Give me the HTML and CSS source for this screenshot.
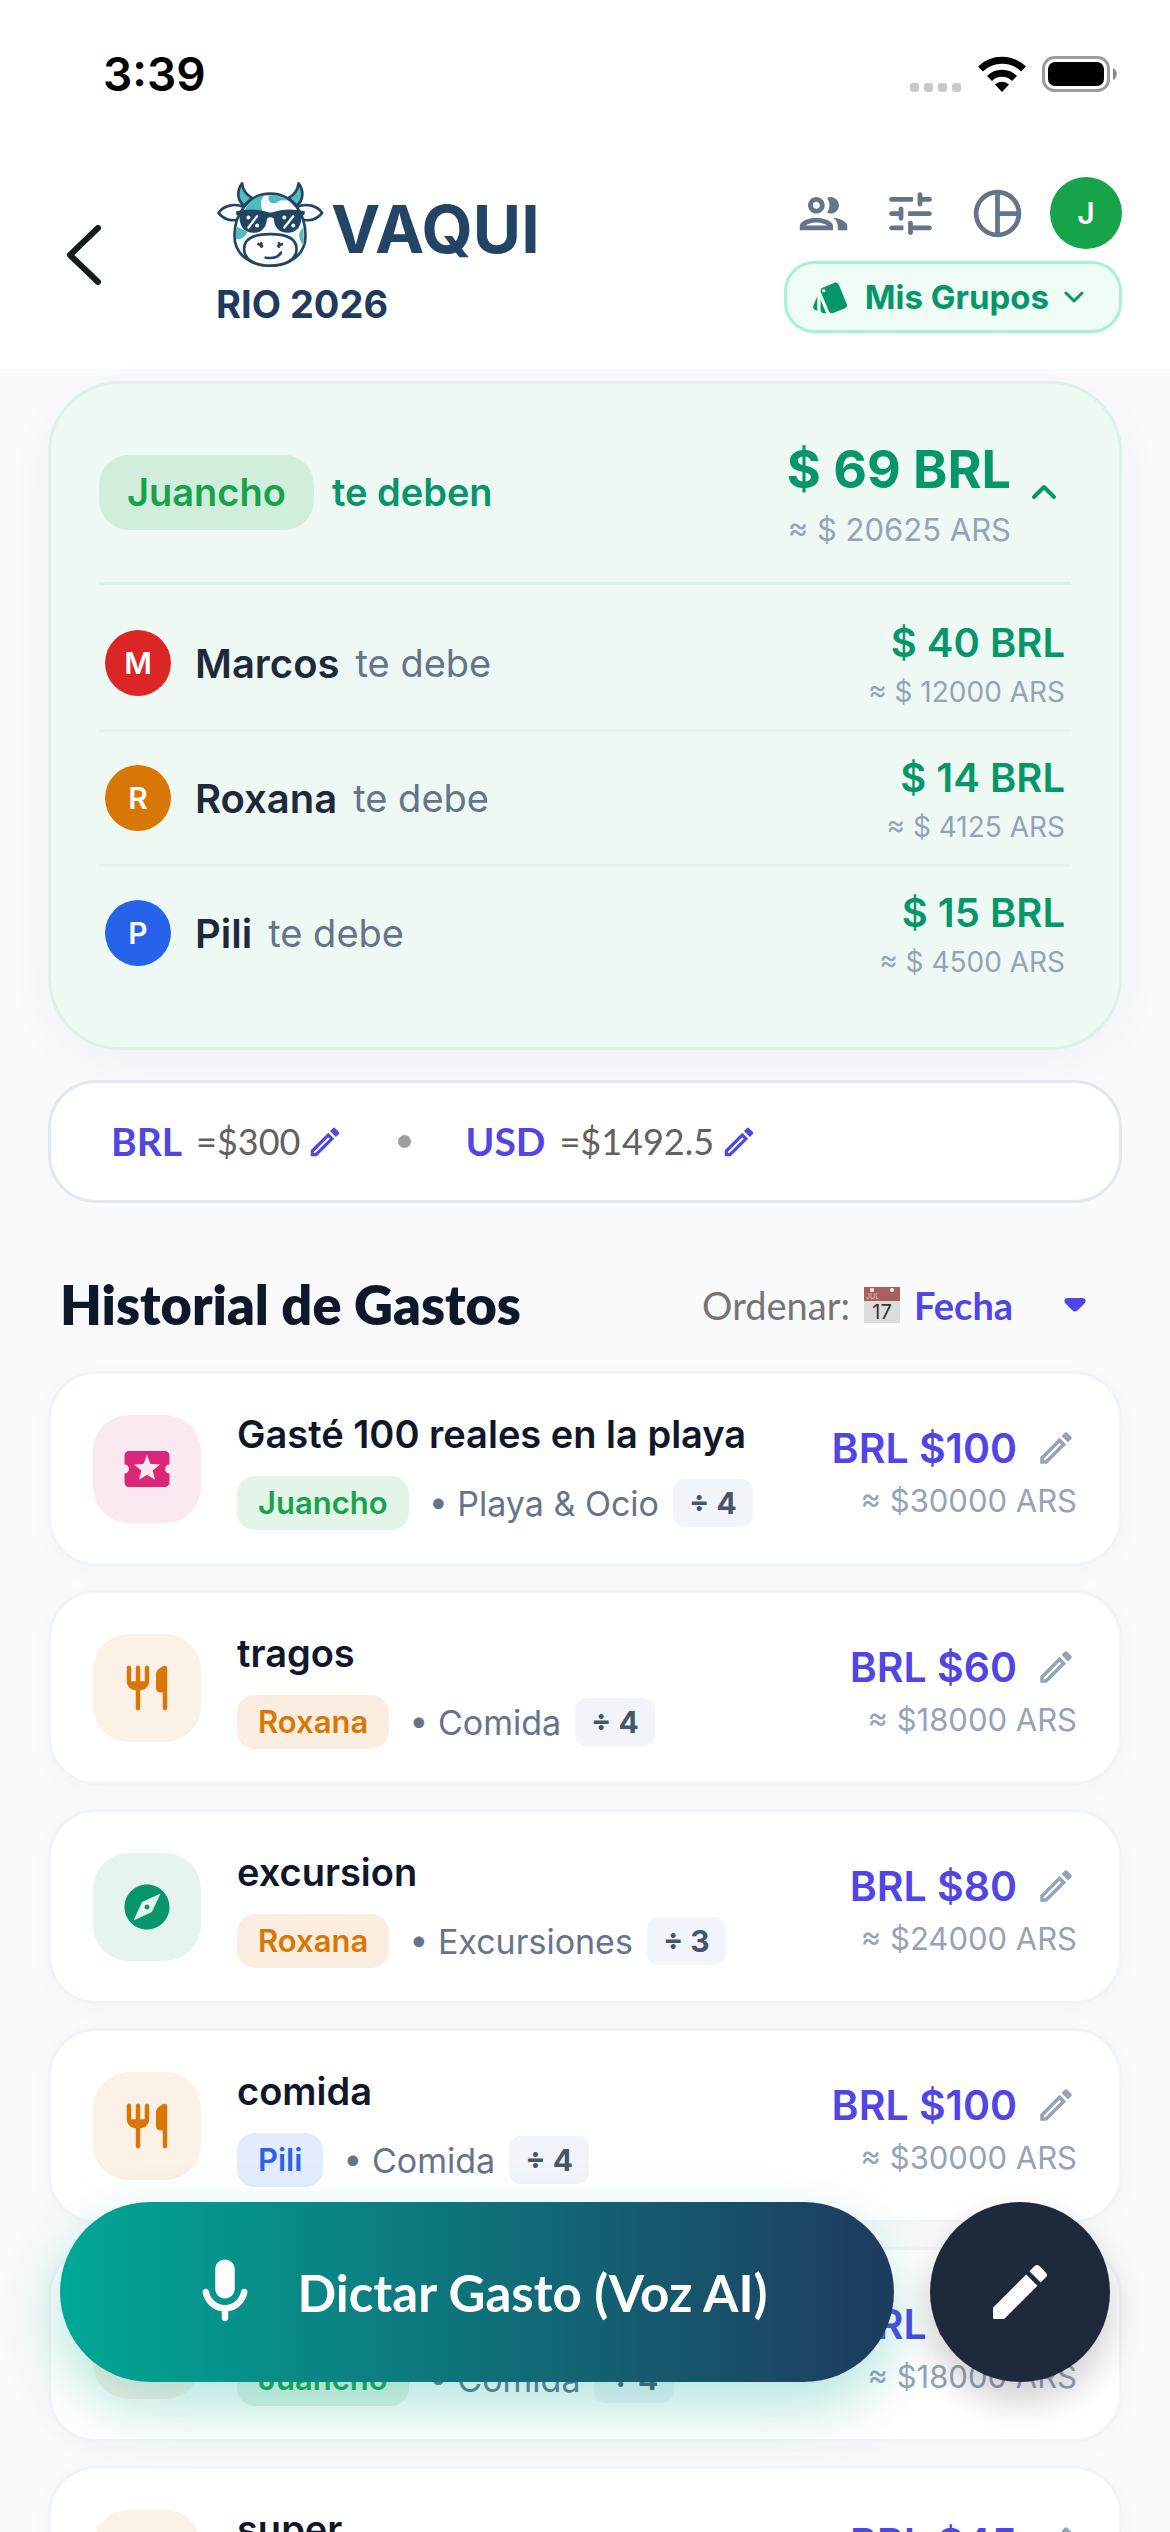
FILE: index.html
```
<!doctype html>
<html lang="es">
  <head>
    <meta charset="utf-8" />
    <title>Vaqui - RIO 2026</title>
    <meta name="viewport" content="width=device-width, initial-scale=1" />
    <link rel="stylesheet" href="styles.css">
  </head>
  <body>
    <!-- shared icons -->
    <svg class="sprite" aria-hidden="true">
      <symbol id="pencil" viewBox="0 0 24 24">
        <path d="M14.06 9.02l.92.92L5.92 19H5v-.92l9.06-9.06M17.66 3c-.25 0-.51.1-.7.29l-1.83 1.83 3.75 3.75 1.83-1.83c.39-.39.39-1.02 0-1.41l-2.34-2.34c-.2-.2-.45-.29-.71-.29zm-3.6 3.19L3 17.25V21h3.75L17.81 9.94l-3.75-3.75z" />
      </symbol>
      <symbol id="food" viewBox="0 0 24 24">
        <path d="M16 6v6c0 1.1.9 2 2 2h1v7c0 .55.45 1 1 1s1-.45 1-1V3.13c0-.65-.61-1.13-1.24-.98C17.6 2.68 16 4.51 16 6zm-5 3H9V3c0-.55-.45-1-1-1s-1 .45-1 1v6H5V3c0-.55-.45-1-1-1s-1 .45-1 1v6c0 2.21 1.79 4 4 4v8c0 .55.45 1 1 1s1-.45 1-1v-8c2.21 0 4-1.79 4-4V3c0-.55-.45-1-1-1s-1 .45-1 1v6z" />
      </symbol>
    </svg>

    <div class="app">
      <div class="status">
        <span class="time">3:39</span>
        <div class="signals">
          <svg width="52" height="36" viewBox="0 0 52 36" fill="#c9c9c9">
            <rect x="0" y="27" width="9" height="9" rx="3" />
            <rect x="14" y="27" width="9" height="9" rx="3" />
            <rect x="28" y="27" width="9" height="9" rx="3" />
            <rect x="42" y="27" width="9" height="9" rx="3" />
          </svg>
          <svg width="48" height="36" viewBox="0 0 48 36">
            <path d="M24 36l-7-7.500a10 10 0 0 1 14 0z" />
            <path d="M11.500 22.500a17.500 17.500 0 0 1 25 0" fill="none" stroke="#000" stroke-width="7" />
            <path d="M2.500 13a31 31 0 0 1 43 0" fill="none" stroke="#000" stroke-width="7" />
          </svg>
          <svg width="76" height="36" viewBox="0 0 76 36">
            <rect x="1.500" y="1.500" width="65" height="33" rx="11" fill="none" stroke="#9b9b9b" stroke-width="3" />
            <rect x="6" y="6" width="56" height="24" rx="7" />
            <path d="M71 12c5 2 5 10 0 12z" fill="#8a8a8a" />
          </svg>
        </div>
      </div>

      <header class="header">
        <button class="back" aria-label="Volver">
          <svg width="36" height="60" viewBox="0 0 36 60"><path d="M32 3L4 30l28 27" fill="none" stroke="#151d1b" stroke-width="6" stroke-linecap="round" stroke-linejoin="round" /></svg>
        </button>
        <div class="brand">
          <div class="logo">
            <svg width="108" height="87" viewBox="58 50 324 262" fill="none" stroke="#224465" stroke-width="8" stroke-linecap="round" stroke-linejoin="round">
              <path d="M136 57C120 78 120 108 142 124L166 101C148 92 139 80 136 57zM306 57C322 78 322 108 300 124L276 101C294 92 303 80 306 57z" fill="#51bcbe" />
              <path d="M142 128C112 116 80 124 65 146C80 166 104 172 126 166M300 128C330 116 362 124 377 146C362 166 338 172 316 166" fill="#fafcfd" />
              <path d="M221 88C290 88 327 150 327 215C327 275 275 305 221 305C165 305 113 275 113 215C113 150 155 88 221 88z" fill="#fafcfd" />
              <g fill="#51bcbe" stroke="none">
                <path d="M204 93C190 105 192 120 197 142L143 140C153 115 176 95 204 93zM216 93C240 91 258 98 272 108C260 110 252 104 243 114C228 122 212 116 216 93z" />
                <path d="M119 186L152 204C142 222 130 226 117 224zM321 186L308 208C307 225 315 237 322 242z" />
              </g>
              <path d="M221 210C275 210 300 225 300 255C300 290 260 305 221 305C180 305 142 290 142 255C142 225 170 210 221 210z" fill="#fff" />
              <path d="M118 141Q170 130 206 142Q221 148 236 142Q272 130 325 141L324 151L315 158C314 190 298 206 274 206C246 206 233 188 231 162Q221 156 211 162C209 188 198 206 170 206C144 206 129 190 128 158L118 151z" fill="#224465" stroke="none" />
              <g stroke="#fff" stroke-width="7">
                <path d="M181 156L155 190M290 156L263 190" />
                <g fill="#fff" stroke="none">
                  <circle cx="155" cy="160" r="6" /><circle cx="181" cy="184" r="6" />
                  <circle cx="263" cy="160" r="6" /><circle cx="290" cy="184" r="6" />
                </g>
              </g>
              <path d="M185 240L196 246M194 238V248M256 240L245 246M247 238V248M207 281Q242 286 253 266" />
            </svg>
            <span class="wordmark">VAQUI</span>
          </div>
          <h1 class="group-name">RIO 2026</h1>
        </div>
        <div class="tools">
          <div class="tool-row">
            <button class="tool" aria-label="Participantes">
              <svg viewBox="0 0 24 24"><path d="M9 13.750c-2.340 0-7 1.170-7 3.500V19h14v-1.750c0-2.330-4.660-3.500-7-3.500zM4.340 17c.84-.58 2.870-1.250 4.660-1.250s3.820.67 4.660 1.250H4.340zM9 12c1.930 0 3.500-1.570 3.500-3.500S10.930 5 9 5 5.500 6.570 5.500 8.500 7.070 12 9 12zm0-5c.83 0 1.500.67 1.500 1.500S9.830 10 9 10s-1.500-.67-1.500-1.500S8.170 7 9 7zm7.040 6.810c1.160.84 1.960 1.960 1.960 3.440V19h4v-1.750c0-2.020-3.500-3.170-5.960-3.440zM15 12c1.930 0 3.500-1.570 3.500-3.500S16.930 5 15 5c-.54 0-1.040.13-1.500.35.63.89 1 1.980 1 3.150s-.37 2.260-1 3.150c.46.22.96.35 1.500.35z" /></svg>
            </button>
            <button class="tool" aria-label="Ajustes">
              <svg viewBox="0 0 24 24"><path d="M3 18c0 .55.45 1 1 1h5v-2H4c-.55 0-1 .45-1 1zM3 6c0 .55.45 1 1 1h9V5H4c-.55 0-1 .45-1 1zm10 14v-1h7c.55 0 1-.45 1-1s-.45-1-1-1h-7v-1c0-.55-.45-1-1-1s-1 .45-1 1v4c0 .55.45 1 1 1s1-.45 1-1zM7 10v1H4c-.55 0-1 .45-1 1s.45 1 1 1h3v1c0 .55.45 1 1 1s1-.45 1-1v-4c0-.55-.45-1-1-1s-1 .45-1 1zm14 2c0-.55-.45-1-1-1h-9v2h9c.55 0 1-.45 1-1zm-5-3c.55 0 1-.45 1-1V7h3c.55 0 1-.45 1-1s-.45-1-1-1h-3V4c0-.55-.45-1-1-1s-1 .45-1 1v4c0 .55.45 1 1 1z" /></svg>
            </button>
            <button class="tool" aria-label="Resumen">
              <svg viewBox="0 0 24 24"><path d="M12 3v18M12 12h9M21 12a9 9 0 1 1-18 0a9 9 0 0 1 18 0z" fill="none" stroke="#64748b" stroke-width="2" /></svg>
            </button>
            <button class="avatar me">J</button>
          </div>
          <button class="groups">
            <svg width="39" height="39" viewBox="0 0 24 24" fill="#059669"><path d="M2.530 19.650l1.340.56v-9.030l-2.430 5.860c-.41 1.020.08 2.190 1.090 2.610zm19.500-3.700L17.070 3.980c-.31-.75-1.040-1.210-1.810-1.230-.26 0-.53.04-.79.15L7.100 5.950c-.75.31-1.210 1.030-1.230 1.800-.01.27.04.54.15.8l4.960 11.970c.31.76 1.050 1.220 1.830 1.230.26 0 .52-.05.77-.15l7.360-3.050c1.020-.42 1.510-1.590 1.090-2.600zM7.880 8.750c-.55 0-1-.45-1-1s.45-1 1-1 1 .45 1 1-.45 1-1 1zm-2 11c0 1.100.9 2 2 2h1.450l-3.450-8.340v6.340z" /></svg>
            <span>Mis Grupos</span>
            <svg width="20" height="12" viewBox="0 0 20 12"><path d="M2 2l8 8 8-8" fill="none" stroke="#059669" stroke-width="3" stroke-linecap="round" stroke-linejoin="round" /></svg>
          </button>
        </div>
      </header>

      <main>
        <section class="summary">
          <div class="summary-head">
            <span class="me-chip">Juancho</span>
            <span class="owed">te deben</span>
            <div class="total">
              <strong>$ 69 BRL</strong>
              <small>≈ $ 20625 ARS</small>
            </div>
            <button class="toggle" aria-label="Contraer">
              <svg width="26" height="16" viewBox="0 0 26 16"><path d="M3 13L13 3l10 10" fill="none" stroke="#059669" stroke-width="4" stroke-linecap="round" stroke-linejoin="round" /></svg>
            </button>
          </div>
          <ul class="debts">
            <li>
              <span class="avatar red">M</span><b>Marcos</b><span class="owes">te debe</span>
              <div class="debt"><strong>$ 40 BRL</strong><small>≈ $ 12000 ARS</small></div>
            </li>
            <li>
              <span class="avatar orange">R</span><b>Roxana</b><span class="owes">te debe</span>
              <div class="debt"><strong>$ 14 BRL</strong><small>≈ $ 4125 ARS</small></div>
            </li>
            <li>
              <span class="avatar blue">P</span><b>Pili</b><span class="owes">te debe</span>
              <div class="debt"><strong>$ 15 BRL</strong><small>≈ $ 4500 ARS</small></div>
            </li>
          </ul>
        </section>

        <section class="rates">
          <div class="rate"><b>BRL</b><span>=$300</span><button aria-label="Editar BRL"><svg><use href="#pencil" /></svg></button></div>
          <span class="dot"></span>
          <div class="rate"><b>USD</b><span>=$1492.5</span><button aria-label="Editar USD"><svg><use href="#pencil" /></svg></button></div>
        </section>

        <div class="list-head">
          <h2>Historial de Gastos</h2>
          <label for="sort">Ordenar:</label>
          <svg class="calendar" width="36" height="36" viewBox="0 0 36 36">
            <rect width="36" height="36" fill="#dcdcdc" />
            <rect width="36" height="14" fill="#ab5f5f" />
            <circle cx="8" cy="3" r="2" fill="#fff" /><circle cx="28" cy="3" r="2" fill="#fff" />
            <text x="2" y="12" font-size="7" fill="#e3c4c4">JUL</text>
            <text x="18" y="32" font-size="20" text-anchor="middle" fill="#333">17</text>
          </svg>
          <select id="sort"><option>Fecha</option></select>
          <svg class="caret" width="22" height="14" viewBox="0 0 22 14"><path d="M3 0h16q4 1 2 5l-7 7q-3 3-6 0L1 5q-2-4 2-5z" fill="#4f46e5" /></svg>
        </div>

        <div class="expenses">
          <article class="expense">
            <div class="icon pink"><svg viewBox="0 0 24 24"><path d="M20 12c0-1.100.9-2 2-2V6c0-1.100-.9-2-2-2H4c-1.100 0-1.990.9-1.990 2v4c1.100 0 1.990.9 1.990 2s-.89 2-2 2v4c0 1.100.9 2 2 2h16c1.100 0 2-.9 2-2v-4c-1.100 0-2-.9-2-2zm-4.420 4.800L12 14.500l-3.580 2.300 1.080-4.120-3.290-2.690 4.240-.25L12 5.800l1.540 3.950 4.240.25-3.290 2.690 1.090 4.110z" /></svg></div>
            <div class="info">
              <h3>Gasté 100 reales en la playa</h3>
              <p><span class="who green">Juancho</span><span class="cat">• Playa &amp; Ocio</span><span class="split">÷ 4</span></p>
            </div>
            <div class="cost">
              <div class="price">BRL $100<button aria-label="Editar"><svg><use href="#pencil" /></svg></button></div>
              <small>≈ $30000 ARS</small>
            </div>
          </article>
          <article class="expense">
            <div class="icon amber"><svg><use href="#food" /></svg></div>
            <div class="info">
              <h3>tragos</h3>
              <p><span class="who amber">Roxana</span><span class="cat">• Comida</span><span class="split">÷ 4</span></p>
            </div>
            <div class="cost">
              <div class="price">BRL $60<button aria-label="Editar"><svg><use href="#pencil" /></svg></button></div>
              <small>≈ $18000 ARS</small>
            </div>
          </article>
          <article class="expense">
            <div class="icon teal"><svg viewBox="0 0 24 24"><path d="M12 10.900c-.61 0-1.100.49-1.100 1.100s.49 1.100 1.100 1.100c.61 0 1.100-.49 1.100-1.100s-.49-1.100-1.100-1.100zM12 2C6.480 2 2 6.480 2 12s4.480 10 10 10 10-4.480 10-10S17.520 2 12 2zm2.190 12.190L6 18l3.810-8.190L18 6l-3.810 8.190z" /></svg></div>
            <div class="info">
              <h3>excursion</h3>
              <p><span class="who amber">Roxana</span><span class="cat">• Excursiones</span><span class="split">÷ 3</span></p>
            </div>
            <div class="cost">
              <div class="price">BRL $80<button aria-label="Editar"><svg><use href="#pencil" /></svg></button></div>
              <small>≈ $24000 ARS</small>
            </div>
          </article>
          <article class="expense">
            <div class="icon amber"><svg><use href="#food" /></svg></div>
            <div class="info">
              <h3>comida</h3>
              <p><span class="who blue">Pili</span><span class="cat">• Comida</span><span class="split">÷ 4</span></p>
            </div>
            <div class="cost">
              <div class="price">BRL $100<button aria-label="Editar"><svg><use href="#pencil" /></svg></button></div>
              <small>≈ $30000 ARS</small>
            </div>
          </article>
          <article class="expense">
            <div class="icon amber"><svg><use href="#food" /></svg></div>
            <div class="info">
              <h3>comida</h3>
              <p><span class="who green">Juancho</span><span class="cat">• Comida</span><span class="split">÷ 4</span></p>
            </div>
            <div class="cost">
              <div class="price">BRL $60<button aria-label="Editar"><svg><use href="#pencil" /></svg></button></div>
              <small>≈ $18000 ARS</small>
            </div>
          </article>
          <article class="expense">
            <div class="icon amber"><svg><use href="#food" /></svg></div>
            <div class="info">
              <h3>super</h3>
              <p><span class="who green">Juancho</span><span class="cat">• Comida</span><span class="split">÷ 4</span></p>
            </div>
            <div class="cost">
              <div class="price">BRL $45<button aria-label="Editar"><svg><use href="#pencil" /></svg></button></div>
              <small>≈ $13500 ARS</small>
            </div>
          </article>
        </div>
      </main>

      <div class="actions">
        <button class="dictate">
          <svg width="78" height="78" viewBox="0 0 24 24" fill="#fff"><path d="M12 14c1.660 0 3-1.340 3-3V5c0-1.660-1.340-3-3-3S9 3.340 9 5v6c0 1.660 1.340 3 3 3zm5.910-3c-.49 0-.9.36-.98.85C16.520 14.200 14.470 16 12 16s-4.520-1.800-4.930-4.150c-.08-.49-.49-.85-.98-.85-.61 0-1.090.54-1 1.140.49 3 2.890 5.350 5.910 5.780V20c0 .55.45 1 1 1s1-.45 1-1v-2.080c3.020-.43 5.420-2.780 5.910-5.780.1-.6-.39-1.140-1-1.140z" /></svg>
          <span>Dictar Gasto (Voz AI)</span>
        </button>
        <button class="write" aria-label="Escribir gasto">
          <svg width="72" height="72" viewBox="0 0 24 24" fill="#fff"><path d="M3 17.460v3.040c0 .28.22.5.5.5h3.040c.13 0 .26-.05.35-.15L17.810 9.940l-3.750-3.750L3.150 17.100c-.1.1-.15.22-.15.36zM20.710 7.040c.39-.39.39-1.020 0-1.410l-2.340-2.340c-.39-.39-1.020-.39-1.410 0l-1.830 1.830 3.750 3.750 1.830-1.830z" /></svg>
        </button>
      </div>
    </div>
  </body>
</html>
```
FILE: styles.css
```
* {
  box-sizing: border-box;
}
body {
  margin: 0;
  background: #f8fafc;
  color: #0f172a;
  font-family: Inter, "Liberation Sans", sans-serif;
}
h1,
h2,
h3,
p,
ul {
  margin: 0;
  padding: 0;
}
button,
select {
  border: 0;
  padding: 0;
  background: none;
  font-family: inherit;
  color: inherit;
}
svg {
  display: block;
  flex: none;
}
.sprite {
  position: absolute;
  width: 0;
  height: 0;
}
.app {
  height: 100vh;
  overflow: hidden;
}

/* top bars */
.status {
  display: flex;
  justify-content: space-between;
  align-items: center;
  height: 141px;
  padding: 6px 52px 0 103px;
  background: #fff;
}
.time {
  color: #000;
  font-size: 46px;
  font-weight: 600;
}
.signals {
  display: flex;
  gap: 16px;
}
.header {
  display: flex;
  align-items: center;
  padding: 36px 48px 36px 66px;
  background: #fff;
}
.brand {
  flex: 1;
  margin-left: 114px;
  padding-top: 4px;
}
.logo {
  display: flex;
  align-items: center;
  height: 87px;
  gap: 7px;
}
.wordmark {
  padding-top: 10px;
  color: #224465;
  font-size: 66px;
  font-weight: 700;
  line-height: 77px;
}
.group-name {
  margin-top: 8px;
  color: #1e3a5f;
  font-size: 38px;
  font-weight: 700;
  line-height: 57px;
}
.tools {
  display: flex;
  flex-direction: column;
  align-items: flex-end;
  gap: 12px;
}
.tool-row {
  display: flex;
  align-items: center;
  gap: 30px;
}
.tool svg {
  width: 57px;
  height: 57px;
  fill: #64748b;
}
.avatar {
  display: flex;
  flex: none;
  align-items: center;
  justify-content: center;
  width: 66px;
  height: 66px;
  border-radius: 50%;
  color: #fff;
  font-size: 30px;
  font-weight: 600;
}
.avatar.me {
  width: 72px;
  height: 72px;
  margin-left: -6px;
  background: #16a34a;
}
.avatar.red {
  background: #dc2626;
}
.avatar.orange {
  background: #d97706;
}
.avatar.blue {
  background: #2563eb;
}
.groups {
  display: flex;
  align-items: center;
  gap: 15px;
  height: 72px;
  padding: 0 35px 0 24px;
  border: 3px solid #a7f3d0;
  border-radius: 30px;
  background: #effdf5;
  color: #059669;
  font-size: 33px;
  font-weight: 700;
}

/* balance */
main {
  padding: 12px 48px 0;
}
.summary {
  padding: 48px;
  border: 3px solid #dff1e7;
  border-radius: 72px;
  background: #eef9f4;
  box-shadow: 0 12px 48px rgba(5, 80, 120, 0.04);
}
.summary-head {
  display: flex;
  align-items: center;
  padding-bottom: 30px;
  border-bottom: 3px solid #dcf0e6;
}
.me-chip {
  padding: 0 28px;
  border-radius: 30px;
  background: #d1eedd;
  color: #16a34a;
  font-size: 38px;
  font-weight: 600;
  line-height: 75px;
}
.owed {
  margin-left: 18px;
  color: #059669;
  font-size: 38px;
  font-weight: 600;
}
.total,
.debt,
.cost {
  display: flex;
  flex-direction: column;
  align-items: flex-end;
  margin-left: auto;
}
small {
  color: #94a3b8;
  font-size: 31px;
}
.total strong {
  color: #059669;
  font-size: 52px;
  font-weight: 700;
  line-height: 76px;
}
.total small {
  line-height: 44px;
}
.toggle {
  margin: 0 14px 0 20px;
}
.debts {
  padding-top: 12px;
  list-style: none;
}
.debts li {
  display: flex;
  align-items: center;
  padding: 17px 6px;
  font-size: 40px;
}
.debts li + li {
  border-top: 3px solid #e5f3ec;
}
.debts b {
  margin: 0 16px 0 24px;
  color: #1e293b;
  font-weight: 600;
}
.owes {
  color: #64748b;
  font-size: 38px;
}
.debt strong {
  color: #059669;
  font-weight: 600;
  line-height: 58px;
}
.debt small {
  font-size: 28px;
  line-height: 40px;
}

/* exchange rates */
.rates {
  display: flex;
  align-items: center;
  gap: 54px;
  margin-top: 30px;
  padding: 0 60px;
  border: 3px solid #e2e8f0;
  border-radius: 48px;
  background: #fff;
  font-family: Lato, sans-serif;
  font-size: 39px;
  line-height: 117px;
}
.rate {
  display: flex;
  align-items: center;
}
.rate b {
  margin-right: 14px;
  color: #4f46e5;
}
.rate span {
  color: #616161;
  font-size: 36px;
}
.rate svg {
  width: 38px;
  height: 38px;
  margin-left: 6px;
  fill: #4f46e5;
}
.dot {
  width: 13px;
  height: 13px;
  border-radius: 50%;
  background: #9e9e9e;
}

/* history */
.list-head {
  display: flex;
  align-items: center;
  padding: 69px 36px 33px 12px;
  font-family: Lato, sans-serif;
  font-size: 38px;
  line-height: 66px;
}
.list-head h2 {
  flex: 1;
  font-size: 54px;
  font-weight: 800;
}
.list-head label {
  color: #757575;
}
.calendar {
  margin: 0 14px;
  font-family: Inter, sans-serif;
}
#sort {
  appearance: none;
  color: #4f46e5;
  font-size: 38px;
  font-weight: 700;
}
.caret {
  margin-left: 50px;
}
.expenses {
  display: flex;
  flex-direction: column;
  gap: 24px;
}
.expense {
  display: flex;
  align-items: center;
  padding: 33px 42px;
  border: 3px solid #f1f5f9;
  border-radius: 48px;
  background: #fff;
  box-shadow: 0 6px 30px rgba(15, 23, 42, 0.02);
}
.icon {
  display: flex;
  align-items: center;
  justify-content: center;
  width: 108px;
  height: 108px;
  margin-right: 36px;
  border-radius: 36px;
}
.icon svg {
  width: 54px;
  height: 54px;
}
.icon.pink {
  background: #fbe9f1;
  fill: #db2777;
}
.icon.amber {
  background: #fbf1e6;
  fill: #d97706;
}
.icon.teal {
  background: #e6f4f0;
  fill: #059669;
}
.info h3 {
  font-size: 38px;
  font-weight: 600;
  line-height: 54px;
}
.info p {
  display: flex;
  align-items: center;
  margin-top: 15px;
}
.who {
  padding: 0 21px;
  border-radius: 18px;
  font-size: 31px;
  font-weight: 600;
  line-height: 54px;
}
.who.green {
  background: #e3f4e9;
  color: #16a34a;
}
.who.amber {
  background: #fbeee0;
  color: #d97706;
}
.who.blue {
  background: #e4ecfd;
  color: #2563eb;
}
.cat {
  margin: 0 14px 0 20px;
  color: #64748b;
  font-size: 34px;
}
.split {
  padding: 0 16px;
  border-radius: 12px;
  background: #f1f5f9;
  color: #475569;
  font-size: 30px;
  font-weight: 700;
  line-height: 48px;
}
.price {
  display: flex;
  align-items: center;
  gap: 18px;
  color: #4f46e5;
  font-size: 41px;
  font-weight: 600;
  line-height: 64px;
}
.price svg {
  width: 42px;
  height: 42px;
  fill: #94a3b8;
}
.cost small {
  line-height: 42px;
}

/* floating buttons */
.actions {
  position: fixed;
  right: 60px;
  bottom: 150px;
  left: 60px;
  display: flex;
  gap: 36px;
}
.dictate {
  display: flex;
  flex: 1;
  align-items: center;
  justify-content: center;
  gap: 33px;
  height: 180px;
  border-radius: 90px;
  background: linear-gradient(90deg, #00a896, #1e3a5f);
  box-shadow: 0 24px 60px rgba(0, 168, 150, 0.3);
  color: #fff;
  font-family: Lato, sans-serif;
  font-size: 51px;
  font-weight: 700;
}
.write {
  display: flex;
  align-items: center;
  justify-content: center;
  width: 180px;
  height: 180px;
  border-radius: 50%;
  background: #1e293b;
  box-shadow: 0 18px 36px rgba(0, 0, 0, 0.2);
}
```
